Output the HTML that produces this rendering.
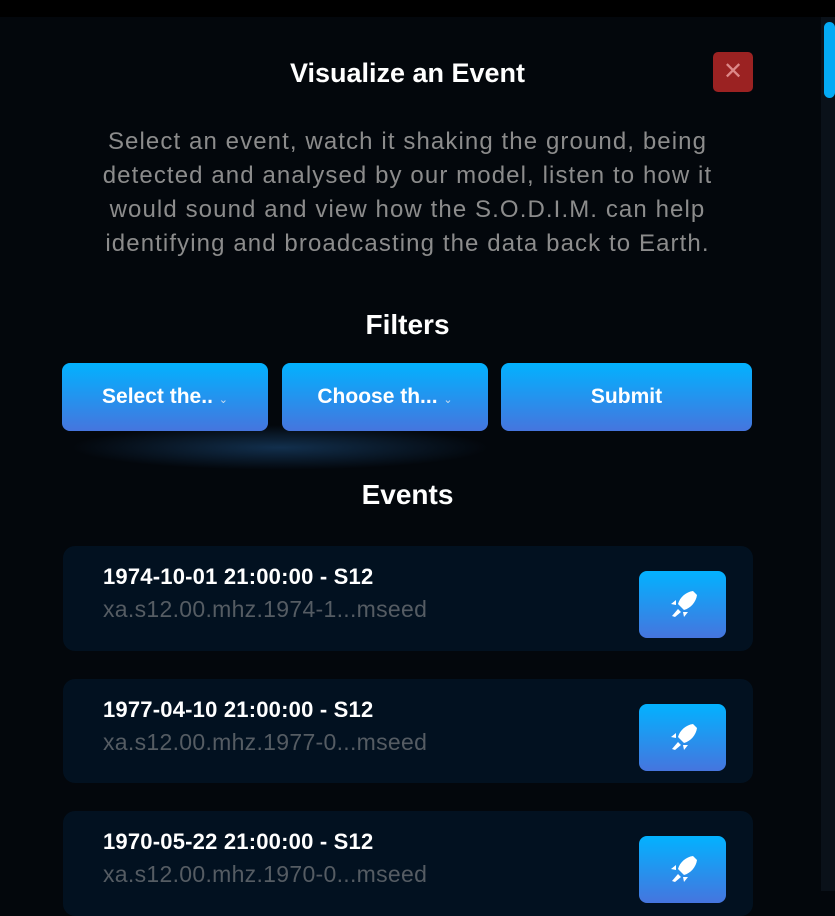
<!DOCTYPE html>
<html><head><style>
*{margin:0;padding:0;box-sizing:border-box}
body{width:835px;height:891px;overflow:hidden;background:#03070c;font-family:"Liberation Sans",sans-serif;position:relative;color:#fff}
.top{position:absolute;left:0;top:0;width:835px;height:17px;background:#000}
.sb{position:absolute;left:821px;top:17px;width:14px;height:874px;background:#0a1119}
.thumb{position:absolute;left:824px;top:22px;width:11px;height:76px;background:#04aaf5;border-radius:6px}
.title{position:absolute;left:0;width:815px;text-align:center;font-weight:bold}
.close{position:absolute;left:713px;top:52px;width:40px;height:40px;background:#9b2222;border-radius:5px;color:#d88;font-size:24px;text-align:center;line-height:39px}
.desc{position:absolute;left:20px;top:125px;width:775px;text-align:center;color:#8c8c8c;font-size:24px;letter-spacing:1.1px;line-height:34px;white-space:nowrap}
.btn{position:absolute;top:363px;height:68px;border-radius:8px;background:linear-gradient(#02b2ff,#4575de);font-weight:bold;font-size:21px;text-align:center;line-height:68px}
.glow{position:absolute;left:70px;top:425px;width:420px;height:45px;background:radial-gradient(ellipse at center,rgba(30,80,130,.55),transparent 70%)}
.card{position:absolute;left:63px;width:690px;height:105px;background:#021120;border-radius:12px}
.card .t{position:absolute;left:40px;top:18px;font-weight:bold;font-size:22px;letter-spacing:.2px}
.card .s{position:absolute;left:40px;top:50px;font-size:23px;letter-spacing:.3px;color:#555c63}
.card .r{position:absolute;left:576px;top:25px;width:87px;height:67px;border-radius:8px;background:linear-gradient(#02b2ff,#4575de)}
</style></head><body>
<div class="top"></div>
<div class="sb"></div><div class="thumb"></div>
<div class="title" style="top:58px;font-size:27px">Visualize an Event</div>
<div class="close">✕</div>
<div class="desc">Select an event, watch it shaking the ground, being<br>detected and analysed by our model, listen to how it<br>would sound and view how the S.O.D.I.M. can help<br>identifying and broadcasting the data back to Earth.</div>
<div class="title" style="top:309px;font-size:28px">Filters</div>
<div class="glow"></div>
<div class="btn" style="left:62px;width:206px">Select the.. <span style="font-size:11px;font-weight:normal;color:#cde">⌄</span></div>
<div class="btn" style="left:282px;width:206px">Choose th... <span style="font-size:11px;font-weight:normal;color:#cde">⌄</span></div>
<div class="btn" style="left:501px;width:251px">Submit</div>
<div class="title" style="top:479px;font-size:28px">Events</div>
<div class="card" style="top:546px"><div class="t">1974-10-01 21:00:00 - S12</div><div class="s">xa.s12.00.mhz.1974-1...mseed</div><div class="r"><svg width="87" height="67" viewBox="0 0 87 67"><path d="M54 20c-7 1-13 6-15 13l6 6c7-2 12-8 13-15zM39 38l-6 7 3 1 6-5zM37 29l-5 4 5 1zM49 41l-4 5-1-5z" fill="#fff"/></svg></div></div>
<div class="card" style="top:679px;height:104px"><div class="t">1977-04-10 21:00:00 - S12</div><div class="s">xa.s12.00.mhz.1977-0...mseed</div><div class="r"><svg width="87" height="67" viewBox="0 0 87 67"><path d="M54 20c-7 1-13 6-15 13l6 6c7-2 12-8 13-15zM39 38l-6 7 3 1 6-5zM37 29l-5 4 5 1zM49 41l-4 5-1-5z" fill="#fff"/></svg></div></div>
<div class="card" style="top:811px"><div class="t">1970-05-22 21:00:00 - S12</div><div class="s">xa.s12.00.mhz.1970-0...mseed</div><div class="r"><svg width="87" height="67" viewBox="0 0 87 67"><path d="M54 20c-7 1-13 6-15 13l6 6c7-2 12-8 13-15zM39 38l-6 7 3 1 6-5zM37 29l-5 4 5 1zM49 41l-4 5-1-5z" fill="#fff"/></svg></div></div>
</body></html>
